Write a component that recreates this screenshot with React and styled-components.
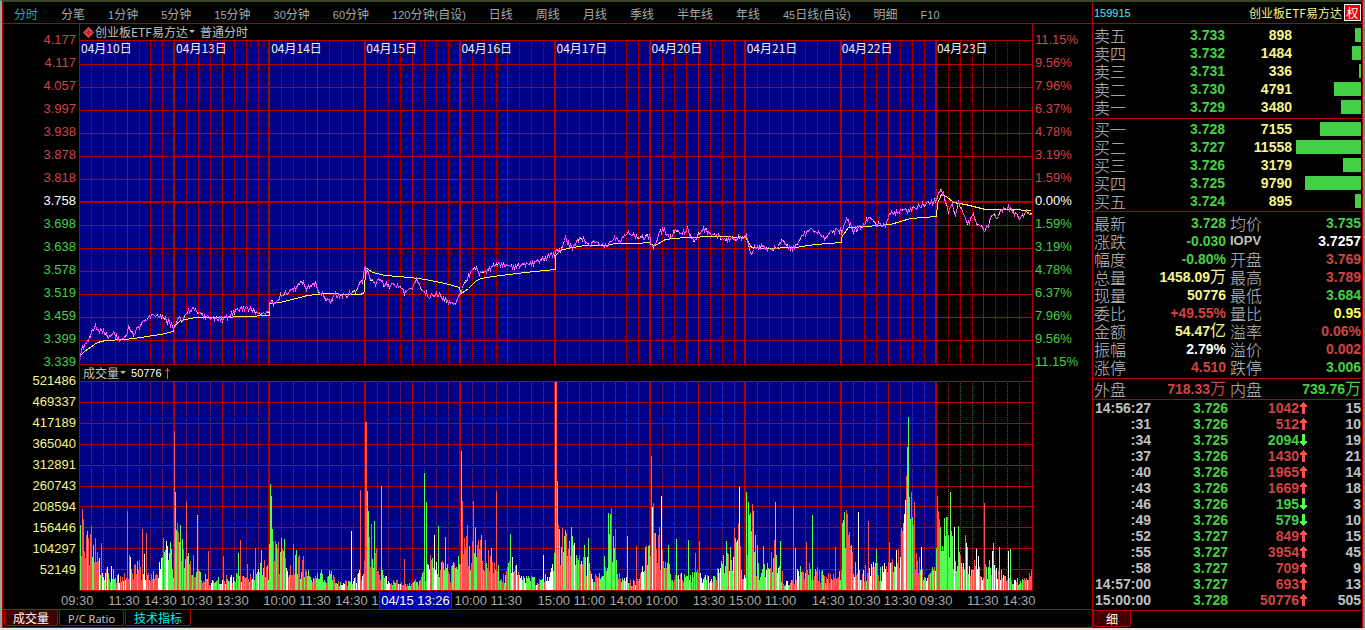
import React from "react";
import styled, { createGlobalStyle } from "styled-components";

const LINE = "#b00000";
const RED = "#d04444";
const GREEN = "#44d044";
const PALE = "#f5f58a";
const GREY = "#c0c0c0";

const cjk = `"Noto Sans CJK SC", sans-serif`;

const Global = createGlobalStyle`
  * { box-sizing: border-box; }
  body { margin: 0; background: #e8e8e8; color: ${GREY}; font: 12px/16px ${cjk}; }
  button { font: inherit; color: inherit; background: none; border: 0; padding: 0; white-space: nowrap; cursor: pointer; }
  table { border-collapse: collapse; table-layout: fixed; width: 100%; }
  th, td { padding: 0; font-weight: 400; white-space: nowrap; }
`;

/* ---------- window ---------- */
const Window = styled.div`
  display: flex;
  min-height: calc(100vh - 2px);
  background: #000;
  border-left: 2px solid #a0a0a0;
  border-right: 2px solid #808080;
  border-top: 1px solid #404040;
`;
const ChartSide = styled.section`
  flex: 1;
  min-width: 0;
  display: flex;
  flex-direction: column;
  border: 1px solid ${LINE};
  border-right: 0;
`;
const QuoteSide = styled.aside`
  flex: none;
  width: 271px;
  display: flex;
  flex-direction: column;
  border: 1px solid ${LINE};
  border-bottom: 0;
`;

/* ---------- toolbar ---------- */
const Toolbar = styled.nav`
  display: flex;
  gap: 23px;
  height: 22px;
  padding: 4px 11px 0;
  border-bottom: 1px solid ${LINE};
  overflow: hidden;
`;
const Period = styled.button`
  height: 16px;
  line-height: 16px;
  color: ${(p) => (p.$active ? "#00b8b8" : "#a8a8a8")};
`;
const Latin = styled.span`
  font-family: "Liberation Sans", sans-serif;
  font-size: 11px;
`;

/* ---------- chart area ---------- */
const Charts = styled.div`
  display: grid;
  grid-template-columns: 76px minmax(0, 1fr) 59px;
`;
const Scale = styled.div`
  padding-top: 9px;
  padding-left: ${(p) => (p.$side === "right" ? 2 : 0)}px;
  padding-right: ${(p) => (p.$side === "right" ? 0 : 3)}px;
  text-align: ${(p) => (p.$side === "right" ? "left" : "right")};
  font: 13px/14px "Liberation Sans", sans-serif;
`;
const ScaleList = styled.div`
  display: flex;
  flex-direction: column;
  gap: ${(p) => p.$gap}px;
  margin-bottom: 5px;
`;
const Mark = styled.span`
  color: ${(p) => p.$color};
`;
const Plots = styled.div`
  border-left: 1px solid ${LINE};
  border-right: 1px solid ${LINE};
`;
const PlotTitle = styled.div`
  display: flex;
  align-items: center;
  gap: ${(p) => p.$gap}px;
  height: 16px;
  padding-left: 3px;
  line-height: 16px;
  color: ${GREY};
`;
const TitleMenu = styled.button`
  display: flex;
  align-items: center;
  gap: 1px;
  height: 16px;
`;
const VolumeNow = styled.span`
  display: flex;
  align-items: center;
  gap: 3px;
  color: #fff;
  font: 11px/16px "Liberation Sans", sans-serif;
`;
const Plot = styled.div`
  position: relative;
`;
const PlotSvg = styled.svg`
  display: block;
  width: 100%;
  height: ${(p) => p.$height}px;
`;
const Dates = styled.div`
  position: absolute;
  inset: 0 0 auto 0;
  display: grid;
  grid-template-columns: repeat(10, minmax(0, 1fr));
  padding-left: 1px;
  color: #f0f0f0;
  font-size: 12px;
  line-height: 16px;
  white-space: nowrap;
`;

/* ---------- time axis ---------- */
const Axis = styled.div`
  position: relative;
  display: flex;
  justify-content: space-between;
  height: 19px;
  padding: 2px 53px 0 58px;
  border-bottom: 1px solid ${LINE};
  font: 13px/15px "Liberation Sans", sans-serif;
  color: #a8a8a8;
`;
const AxisGroup = styled.div`
  display: flex;
`;
const AxisTime = styled.span`
  width: 36px;
  white-space: nowrap;
`;
const Cursor = styled.div`
  position: absolute;
  top: 1px;
  left: 376px;
  width: 73px;
  height: 17px;
  text-align: center;
  line-height: 17px;
  white-space: nowrap;
  color: #fff;
  background: #0000b0;
  border-left: 1px solid ${LINE};
  border-right: 1px solid ${LINE};
`;

/* ---------- bottom tabs ---------- */
const Tabs = styled.div`
  display: flex;
  gap: 1px;
  height: 17px;
  padding-left: ${(p) => p.$inset}px;
`;
const Tab = styled.button`
  height: 16px;
  padding: 0 ${(p) => p.$pad || 8}px;
  line-height: 16px;
  border: 1px solid ${LINE};
  border-top: 0;
  border-radius: 0 0 3px 3px;
  color: ${(p) => p.$color};
  background: ${(p) => (p.$active ? "#400000" : "#000")};
`;
const TabLatin = styled.span`
  font-family: "Noto Sans", sans-serif;
  font-size: 11px;
`;

/* ---------- quote panel ---------- */
const Title = styled.header`
  display: flex;
  align-items: center;
  height: 22px;
  padding: 0 1px 0 1px;
  border-bottom: 1px solid ${LINE};
  color: ${PALE};
`;
const Code = styled.span`
  flex: 1;
  color: #40f0f0;
  font: 11px/16px "Liberation Sans", sans-serif;
`;
const Rights = styled.button`
  width: 17px;
  height: 17px;
  margin-left: 2px;
  line-height: 14px;
  color: #fff;
  background: #f00000;
  border: 1px solid #fff;
`;
const Block = styled.div`
  padding: ${(p) => p.$pad};
  border-bottom: 1px solid ${LINE};
`;
const Row = styled.tr`
  height: ${(p) => p.$h}px;
  line-height: ${(p) => p.$h}px;
`;
const Name = styled.th`
  width: ${(p) => p.$w}px;
  padding-left: ${(p) => p.$left || 0}px;
  text-align: left;
  color: ${GREY};
  font-family: ${(p) => (p.$latin ? `"Liberation Sans", sans-serif` : cjk)};
  font-size: ${(p) => (p.$latin ? 13 : 16)}px;
  font-weight: ${(p) => (p.$latin ? 700 : 300)};
  line-height: inherit;
`;
const Num = styled.td`
  width: ${(p) => (p.$w ? p.$w + "px" : "auto")};
  text-align: right;
  color: ${(p) => p.$color};
  font: bold 14px "Liberation Sans", ${cjk};
  line-height: inherit;
`;
const Unit = styled.span`
  font-size: 16px;
  font-weight: 400;
  line-height: 16px;
`;
const BarCell = styled.td`
  text-align: right;
`;
const Bar = styled.div`
  height: 14px;
  margin-left: auto;
  background: ${GREEN};
`;
const ArrowCell = styled.td`
  width: 10px;
  line-height: 0;
`;

/* ---------- data ---------- */
const periods = ["分时", "分笔", "1分钟", "5分钟", "15分钟", "30分钟", "60分钟", "120分钟(自设)", "日线", "周线", "月线", "季线", "半年线", "年线", "45日线(自设)", "明细", "F10"];
const prices = ["4.177", "4.117", "4.057", "3.997", "3.938", "3.878", "3.818", "3.758", "3.698", "3.638", "3.578", "3.519", "3.459", "3.399", "3.339"];
const changes = ["11.15%", "9.56%", "7.96%", "6.37%", "4.78%", "3.19%", "1.59%", "0.00%", "1.59%", "3.19%", "4.78%", "6.37%", "7.96%", "9.56%", "11.15%"];
const volumes = ["521486", "469337", "417189", "365040", "312891", "260743", "208594", "156446", "104297", "52149"];
const days = ["10", "13", "14", "15", "16", "17", "20", "21", "22", "23"];
const axisGroups = [
  ["09:30"],
  ["11:30", "14:30", "10:30", "13:30"],
  ["10:00", "11:30", "14:30", "10:30"],
  ["", "10:00", "11:30"],
  ["15:00", "11:00", "14:00", "10:00"],
  ["13:30", "15:00", "11:00"],
  ["14:30", "10:30", "13:30", "09:30"],
  ["11:30", "14:30"],
];
const asks = [["卖五", "3.733", 898], ["卖四", "3.732", 1484], ["卖三", "3.731", 336], ["卖二", "3.730", 4791], ["卖一", "3.729", 3480]];
const bids = [["买一", "3.728", 7155], ["买二", "3.727", 11558], ["买三", "3.726", 3179], ["买四", "3.725", 9790], ["买五", "3.724", 895]];
const stats = [
  ["最新", "3.728", "", GREEN, "均价", "3.735", GREEN],
  ["涨跌", "-0.030", "", GREEN, "IOPV", "3.7257", "#fff"],
  ["幅度", "-0.80%", "", GREEN, "开盘", "3.769", RED],
  ["总量", "1458.09", "万", PALE, "最高", "3.789", RED],
  ["现量", "50776", "", PALE, "最低", "3.684", GREEN],
  ["委比", "+49.55%", "", RED, "量比", "0.95", "#ffff50"],
  ["金额", "54.47", "亿", PALE, "溢率", "0.06%", RED],
  ["振幅", "2.79%", "", "#fff", "溢价", "0.002", RED],
  ["涨停", "4.510", "", RED, "跌停", "3.006", GREEN],
];
const ticks = [
  ["14:56:27", "3.726", 1042, 1, 15], [":31", "3.726", 512, 1, 10], [":34", "3.725", 2094, 0, 19],
  [":37", "3.726", 1430, 1, 21], [":40", "3.726", 1965, 1, 14], [":43", "3.726", 1669, 1, 18],
  [":46", "3.726", 195, 0, 3], [":49", "3.726", 579, 0, 10], [":52", "3.727", 849, 1, 15],
  [":55", "3.727", 3954, 1, 45], [":58", "3.727", 709, 1, 9], ["14:57:00", "3.727", 693, 1, 13],
  ["15:00:00", "3.728", 50776, 1, 505],
];

/* key points of the intraday price, one list per day, in plot units */
const priceKeys = [
  [79,361,82,347,88,339,95,325,99,332,101,328,108,337,113,332,120,341,126,335,128,326,133,333,140,325,150,316,163,316,173,327],
  [174,327,179,315,181,323,185,312,193,308,203,316,220,319,228,317,235,310,247,307,260,314,269,313],
  [269,301,273,304,281,294,290,291,302,282,306,288,315,283,320,293,330,302,335,294,345,296,354,291,362,281],
  [364,267,370,277,374,284,379,278,383,284,395,285,404,292,412,287,416,280,420,287,428,296,436,293,446,300,455,306,460,292],
  [460,292,464,283,470,273,474,266,480,273,488,270,497,263,514,266,534,262,555,253],
  [556,249,560,252,565,238,571,248,579,238,585,240,588,246,594,240,606,246,613,237,619,241,627,233,636,237,650,236],
  [650,242,653,247,658,235,663,228,669,237,676,229,681,233,687,229,693,241,703,228,710,234,725,239,736,238,745,236],
  [746,236,750,255,754,247,764,246,769,250,775,247,782,241,788,248,794,247,800,237,811,229,818,233,825,237,832,231,841,229],
  [841,234,843,226,847,219,853,231,862,225,868,217,875,224,885,225,890,213,896,211,910,210,918,206,928,202,935,201],
  [937,195,941,191,944,196,948,211,952,205,955,213,958,202,964,216,968,223,973,215,977,223,984,229,988,225,993,212,996,218,1001,210,1008,207,1015,214,1020,217,1026,212,1031,214],
];
const averageKeys = [
  80,355,84,351,97,342,105,340,125,339,140,337,160,334,173,331,174,325,180,320,195,317,220,317,245,316,269,315,
  269,303,280,302,307,295,325,293,350,294,360,294,364,292,365,267,372,272,385,275,410,277,425,279,445,283,459,287,460,292,
  461,293,468,288,475,281,480,278,500,275,525,272,555,269,555,255,560,250,567,248,585,245,605,245,615,243,635,243,650,242,
  650,244,655,245,665,239,685,237,715,236,745,237,746,238,751,247,765,248,795,247,815,244,841,242,
  841,237,848,227,865,226,890,224,910,218,936,216,937,203,941,194,946,196,953,202,965,204,985,209,1010,209,1031,210,
];
const volumeKeys = [
  79,60,85,42,92,45,98,30,105,20,115,16,122,12,130,20,140,22,148,16,156,14,162,40,170,38,173,25,
  175,75,180,50,186,30,192,22,200,14,210,9,220,10,230,12,250,12,258,20,262,26,268,18,
  270,60,275,38,282,30,288,18,295,30,303,22,310,14,320,14,332,18,340,8,348,7,356,12,363,20,
  366,90,370,42,376,30,380,18,385,12,395,9,405,6,415,8,425,15,432,30,440,24,450,17,459,25,
  461,50,466,40,475,42,483,32,492,30,497,20,503,12,512,26,518,14,530,12,540,9,550,15,555,35,
  557,70,562,45,570,45,577,25,586,30,592,15,600,15,607,40,614,40,620,10,632,8,640,12,646,40,650,40,
  653,70,658,40,664,30,670,18,680,14,690,15,697,15,705,12,715,10,720,25,727,35,733,35,738,50,742,12,745,20,
  747,50,752,60,757,20,765,20,771,35,778,25,784,8,790,6,796,15,806,25,812,20,820,15,830,12,840,18,
  842,60,847,60,852,30,860,16,868,20,877,20,885,20,893,25,900,40,906,90,910,60,915,45,920,20,928,14,935,20,
  938,60,943,35,947,60,952,45,958,30,962,20,966,40,970,15,976,30,984,18,990,25,997,18,1005,12,1010,15,1015,7,1022,12,1031,14,
];
const spikes = "79:88r 80:65g 82:81r 83:71r 87:59g 91:64r 95:52r 101:47r 127:79r 129:35r 130:33w 142:61r 144:36w 146:57r 163:52r 174:159r 175:98g 176:60g 178:58r 180:65g 182:51g 186:88r 197:75g 193:35r 208:39r 223:34r 238:37g 240:50r 247:26r 255:42r 261:40g 270:106g 271:94g 272:61g 273:49r 276:46g 278:48r 281:52g 284:51g 293:46r 303:34r 351:59w 360:100r 365:168r 366:168r 367:99g 368:79g 371:66r 374:69g 381:104g 404:31r 424:117g 426:88g 434:55w 438:64g 445:53g 461:139g 462:89r 467:65r 473:89r 475:63g 481:55g 485:50r 491:42g 496:99r 510:56g 543:35w 555:208g 556:208r 557:109g 559:61g 562:62r 566:57r 571:63g 574:47w 584:45g 588:52g 608:77g 610:76g 611:82r 613:54g 615:61r 627:54g 636:44r 651:134r 652:83w 653:87r 655:57g 659:63r 661:94w 668:45g 676:51g 688:50g 695:37r 699:49r 726:49g 734:62r 738:67r 739:103w 740:44r 746:98g 748:88g 750:77g 752:86r 753:79g 755:55g 757:45g 763:44g 774:50r 775:88g 780:49g 793:84r 795:42g 806:48r 812:75g 835:43r 842:67g 844:78g 846:80r 847:76r 848:55r 858:78w 868:69r 876:41g 889:48r 902:59r 905:90w 906:114r 907:143g 908:173g 909:93g 910:71g 911:98r 914:88r 921:43w 937:94r 939:71r 944:72g 946:73g 947:73r 950:98g 954:63w 958:64g 965:55r 967:43g 984:87r 992:39w 993:47g 999:43g 1008:39w 1010:41g"
  .split(" ")
  .reduce((m, s) => {
    const [x, rest] = s.split(":");
    m[x] = [parseInt(rest, 10), rest.slice(-1)];
    return m;
  }, {});
/* which colours dominate up to a given minute */
const moods = [[82, "rg"], [98, "rrrrg"], [112, "ggwr"], [120, "wrg"], [140, "rrgwr"], [157, "rrgw"], [161, "w"], [173, "gggw"], [190, "rg"], [205, "rg"], [260, "grrwg"], [268, "gwr"], [275, "gr"], [290, "rgrw"], [306, "rrg"], [318, "rg"], [340, "gggr"], [363, "rwg"], [380, "rrg"], [400, "wrg"], [425, "grr"], [460, "rggw"], [500, "rrrgr"], [545, "gwrg"], [552, "w"], [575, "ggr"], [600, "rrggw"], [620, "grg"], [648, "gwrg"], [665, "grr"], [690, "rgw"], [720, "gwr"], [745, "wrgw"], [765, "grg"], [800, "rgw"], [840, "grr"], [860, "rgw"], [905, "rrgw"], [918, "gr"], [936, "gwr"], [960, "ggr"], [1000, "grw"], [1040, "rrgw"]];

const at = (keys, x) => {
  for (let i = 2; i < keys.length; i += 2) {
    if (x <= keys[i]) {
      const span = keys[i] - keys[i - 2] || 1;
      return keys[i - 1] + ((keys[i + 1] - keys[i - 1]) * (x - keys[i - 2])) / span;
    }
  }
  return keys[keys.length - 1];
};
const makeRandom = (seed) => () => {
  seed = (seed * 1664525 + 1013904223) % 4294967296;
  return seed / 4294967296;
};

const W = 952;
const X0 = 80;
const dayX = (i) => Math.round((W * i) / 10);

const pricePath = (() => {
  const rnd = makeRandom(7);
  const pts = [];
  const dots = [];
  priceKeys.forEach((keys) => {
    for (let x = keys[0]; x <= keys[keys.length - 2]; x++) {
      const y = Math.round(at(keys, x) - 40 + (rnd() - 0.5) * 5);
      pts.push(`${x - X0 + 0.5},${y + 0.5}`);
      if (rnd() < 0.25) dots.push(`M${x - X0},${y + (rnd() < 0.5 ? 1.5 : -0.5)}h1`);
    }
  });
  return { line: pts.join(" "), dots: dots.join("") };
})();
const averageLine = averageKeys.reduce((s, v, i) => s + (i % 2 ? `${v - 40 + 0.5} ` : `${v - X0 + 0.5},`), "");

const volumeBars = (() => {
  const rnd = makeRandom(21);
  const out = { r: "", g: "", w: "" };
  for (let x = X0; x < X0 + W; x++) {
    let [h, c] = spikes[x] || [];
    if (!h) {
      const mood = moods.find((m) => x <= m[0])[1];
      c = mood[Math.floor(rnd() * mood.length)];
      h = Math.max(2, Math.round(at(volumeKeys, x) * (0.45 + rnd() * 0.95)));
    }
    out[c] += `M${x - X0 + 0.5},209v${-h}`;
  }
  return out;
})();

function Grid({ rows, bottom, thick, dash }) {
  const lines = [];
  for (let i = 0; i < 80; i++) {
    const x = Math.round((W * i) / 80);
    if (i % 8 === 0) {
      if (i) lines.push(<rect key={i} x={x - 2} y="0" width="2" height={bottom} fill={LINE} />);
    } else if (i % 8 === 4) {
      lines.push(<rect key={i} x={x - 1} y="0" width="1" height={bottom} fill={LINE} />);
    } else {
      let dots = "";
      for (let y = 2; y < bottom; y += 2) dots += `M${x - 1},${y}h1v1h-1z`;
      lines.push(<path key={i} d={dots} fill={dash} />);
    }
  }
  return (
    <g shapeRendering="crispEdges">
      <rect x="0" y="0" width={dayX(9)} height={bottom - 1} fill="#000084" />
      {lines}
      {rows.map((y) => (
        <rect key={y} x="0" y={y} width={W} height={y === thick ? 2 : 1} fill={LINE} />
      ))}
    </g>
  );
}

const Caret = () => (
  <svg width="6" height="4" aria-hidden="true"><path d="M0 0h6L3 3z" fill="currentColor" /></svg>
);
const Diamond = () => (
  <svg width="11" height="11" viewBox="0 0 11 11" aria-hidden="true">
    <g fill="none" stroke="#ff5050">
      <path strokeWidth="1.3" d="M5.5 .8 10.2 5.5 5.5 10.2.8 5.5z" />
      <path strokeWidth="1.2" d="M5.5 3.2 7.8 5.5 5.5 7.8 3.2 5.5z" />
      <path d="M3 3l5 5M8 3l-5 5" strokeWidth=".7" />
    </g>
  </svg>
);
const Arrow = ({ up }) => (
  <svg width="9" height="12" viewBox="0 0 9 12" role="img" aria-label={up ? "买" : "卖"} shapeRendering="crispEdges">
    <path
      d={up ? "M4 0h1v1h1v1h1v1h1v2H6v7H3V5H1V3h1V2h1V1h1z" : "M4 12h1v-1h1v-1h1V9h1V7H6V0H3v7H1v2h1v1h1v1h1z"}
      fill={up ? "#ff5050" : "#50ff50"}
    />
  </svg>
);

const Mixed = ({ text }) =>
  text.split(/([A-Za-z0-9()]+)/).filter(Boolean).map((part, i) =>
    /^[A-Za-z0-9()]/.test(part) ? <Latin key={i}>{part}</Latin> : part
  );

function Depth({ rows, label }) {
  return (
    <table aria-label={label}>
      <tbody>
        {rows.map(([name, price, vol]) => (
          <Row key={name} $h={18}>
            <Name $w={60} $left={1} scope="row">{name}</Name>
            <Num $w={72} $color={GREEN}>{price}</Num>
            <Num $w={67} $color={PALE}>{vol}</Num>
            <BarCell><Bar style={{ width: Math.ceil((vol * 65) / 11558) }} /></BarCell>
          </Row>
        ))}
      </tbody>
    </table>
  );
}

function Stats({ rows, label }) {
  return (
    <table aria-label={label}>
      <tbody>
        {rows.map(([n1, v1, unit1, c1, n2, v2, c2, unit2]) => (
          <Row key={n1} $h={18}>
            <Name $w={45} $left={1} scope="row">{n1}</Name>
            <Num $w={88} $color={c1}>{v1}{unit1 && <Unit>{unit1}</Unit>}</Num>
            <Name $w={50} $left={4} $latin={n2 === "IOPV"} scope="row">{n2}</Name>
            <Num $color={c2}>{v2}{unit2 && <Unit>{unit2}</Unit>}</Num>
          </Row>
        ))}
      </tbody>
    </table>
  );
}

export default function App() {
  return (
    <>
      <Global />
      <Window>
        <ChartSide>
          <Toolbar>
            {periods.map((p, i) => <Period key={p} $active={i === 0}><Mixed text={p} /></Period>)}
          </Toolbar>
          <Charts>
            <Scale $side="left">
              <ScaleList $gap={9}>
                {prices.map((p, i) => <Mark key={p} $color={i < 7 ? RED : i === 7 ? "#fff" : GREEN}>{p}</Mark>)}
              </ScaleList>
              <ScaleList $gap={7}>
                {volumes.map((v) => <Mark key={v} $color={PALE}>{v}</Mark>)}
              </ScaleList>
            </Scale>
            <Plots>
              <PlotTitle $gap={5}>
                <TitleMenu><Diamond />创业板ETF易方达<Caret /></TitleMenu>
                <span>普通分时</span>
              </PlotTitle>
              <Plot>
                <PlotSvg $height={325} viewBox={`0 0 ${W} 325`} preserveAspectRatio="none" role="img" aria-label="创业板ETF易方达 分时">
                  <Grid bottom={324} dash="#c80000" thick={161} rows={[0, 24, 47, 70, 93, 116, 139, 161, 185, 208, 231, 254, 277, 300, 324]} />
                  <g fill="none" shapeRendering="crispEdges">
                    <polyline points={averageLine} stroke="#ffff50" />
                    <polyline points={pricePath.line} stroke="#ff50ff" />
                    <path d={pricePath.dots} stroke="#fff" />
                  </g>
                </PlotSvg>
                <Dates>{days.map((d) => <span key={d}>04月{d}日</span>)}</Dates>
              </Plot>
              <PlotTitle $gap={5}>
                <TitleMenu>成交量<Caret /></TitleMenu>
                <VolumeNow>
                  50776
                  <svg width="5" height="11" aria-hidden="true"><path d="M2.5 0v11M.5 3.5 2.5 1l2 2.5" fill="none" stroke="#ff5050" /></svg>
                </VolumeNow>
              </PlotTitle>
              <PlotSvg $height={210} viewBox={`0 0 ${W} 210`} preserveAspectRatio="none" role="img" aria-label="成交量">
                <Grid bottom={210} dash="#b02040" rows={[0, 21, 42, 63, 84, 105, 125, 146, 167, 188, 209]} />
                <g fill="none" shapeRendering="crispEdges">
                  <path d={volumeBars.r} stroke="#ff5050" />
                  <path d={volumeBars.g} stroke="#50ff50" />
                  <path d={volumeBars.w} stroke="#fff" />
                </g>
              </PlotSvg>
            </Plots>
            <Scale $side="right">
              <ScaleList $gap={9}>
                {changes.map((c, i) => <Mark key={i} $color={i < 7 ? RED : i === 7 ? "#fff" : GREEN}>{c}</Mark>)}
              </ScaleList>
            </Scale>
          </Charts>
          <Axis>
            {axisGroups.map((g, i) => (
              <AxisGroup key={i}>{g.map((t) => <AxisTime key={t}>{t}</AxisTime>)}</AxisGroup>
            ))}
            <Cursor>04/15 13:26</Cursor>
          </Axis>
          <Tabs $inset={1}>
            <Tab $active $color="#fff">成交量</Tab>
            <Tab $color={GREY}><TabLatin>P/C Ratio</TabLatin></Tab>
            <Tab $color="#00f0f0">技术指标</Tab>
          </Tabs>
        </ChartSide>
        <QuoteSide>
          <Title>
            <Code>159915</Code>
            创业板ETF易方达
            <Rights>权</Rights>
          </Title>
          <Block $pad="2px 1px 2px 0"><Depth rows={asks} label="卖盘" /></Block>
          <Block $pad="1px 1px 1px 0"><Depth rows={bids} label="买盘" /></Block>
          <Block $pad="2px 1px 2px 0"><Stats rows={stats} label="行情" /></Block>
          <Block $pad="1px 1px 1px 0"><Stats rows={[["外盘", "718.33", "万", RED, "内盘", "739.76", GREEN, "万"]]} label="内外盘" /></Block>
          <Block $pad="0 1px 2px 0">
            <table aria-label="成交明细">
              <tbody>
                {ticks.map(([t, p, v, up, n]) => (
                  <Row key={t} $h={16}>
                    <Num $w={58} $color={GREY}>{t}</Num>
                    <Num $w={77} $color={GREEN}>{p}</Num>
                    <Num $w={71} $color={up ? RED : GREEN}>{v}</Num>
                    <ArrowCell><Arrow up={up} /></ArrowCell>
                    <Num $color={GREY}>{n}</Num>
                  </Row>
                ))}
              </tbody>
            </table>
          </Block>
          <Tabs $inset={0}>
            <Tab $active $pad={12} $color="#fff">细</Tab>
          </Tabs>
        </QuoteSide>
      </Window>
    </>
  );
}
